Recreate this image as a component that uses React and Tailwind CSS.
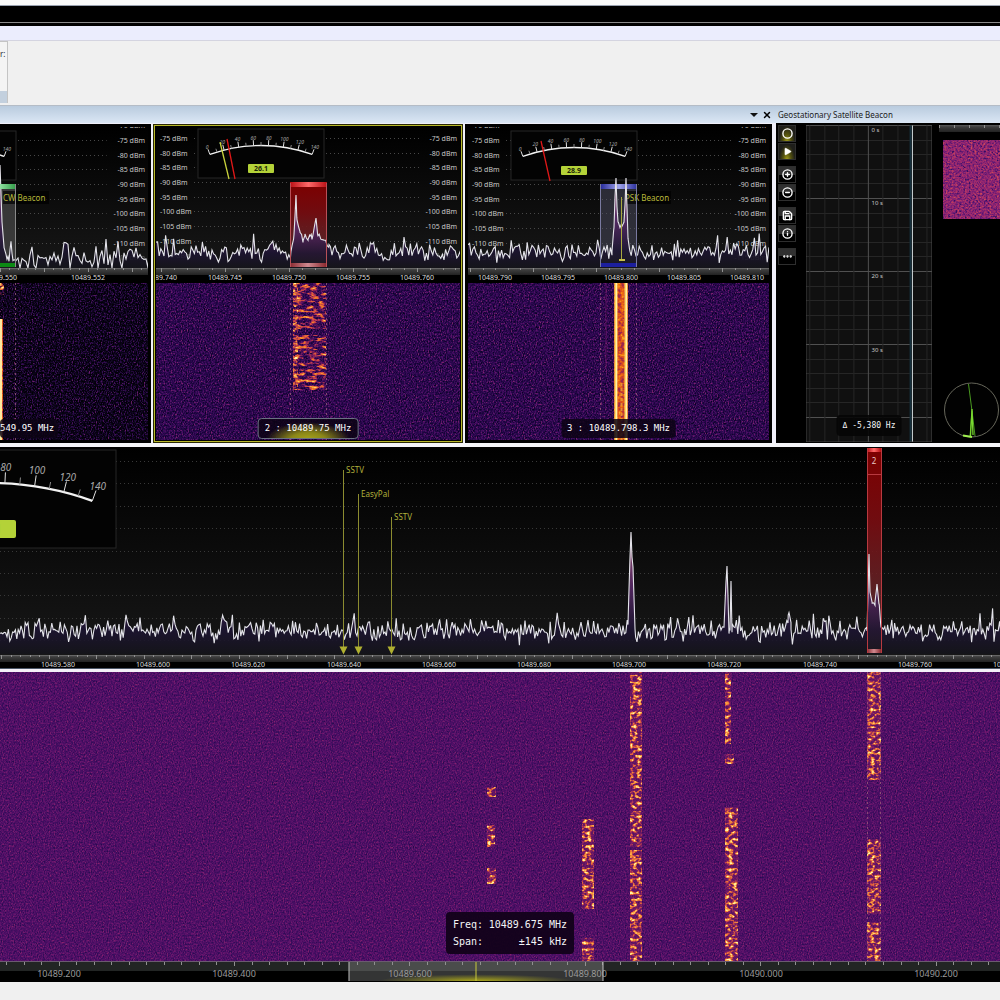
import React from "react";
import {
  Circle,
  CirclePlus,
  CircleMinus,
  Save,
  Info,
  Ellipsis,
  Play,
  X,
} from "lucide-react";

// Small seeded generator so the traces look the same on every render
const makeRandom = (seed) => {
  let s = seed;
  return () => {
    s = (s * 16807) % 2147483647;
    return s / 2147483647;
  };
};

// y on a list of [x, y] points, or null outside of them
const envelopeAt = (points, x) => {
  for (let i = 1; i < points.length; i++) {
    const [x0, y0] = points[i - 1];
    const [x1, y1] = points[i];
    if (x >= x0 && x <= x1) {
      return y0 + ((y1 - y0) * (x - x0)) / (x1 - x0 || 1);
    }
  }
  return null;
};

const makeTrace = ({ width, step, base, amp, floor, seed, signals }) => {
  const random = makeRandom(seed);
  const xs = [];
  for (let x = 0; x <= width; x += step) xs.push(x);
  signals.forEach((points) => points.forEach(([x]) => xs.push(x)));
  xs.sort((a, b) => a - b);

  return xs.map((x) => {
    let noise = (random() + random() + random() - 1.5) * amp;
    if (random() < 0.07) noise -= amp * (0.6 + random() * 0.8);
    let y = base + noise;
    for (const points of signals) {
      const top = envelopeAt(points, x);
      if (top !== null) y = top + (top > base - 30 ? noise * 0.3 : 0);
    }
    return [x, Math.min(y, floor)];
  });
};

const range = (count) => Array.from({ length: count }, (_, i) => i);

// Number of axis labels that fit the window
const countFor = (start, step) =>
  Math.max(1, Math.ceil((window.innerWidth + 14 - start) / step));

const Filters = () => (
  <svg className="absolute h-0 w-0" aria-hidden="true">
    <defs>
      {/* Background noise, one colour table for each brightness */}
      <filter id="noise-dark" x="0" y="0" width="100%" height="100%" colorInterpolationFilters="sRGB">
        <feTurbulence type="fractalNoise" baseFrequency="0.83 0.57" numOctaves="3" seed="4" />
        <feColorMatrix values="1.1 1.1 0 0 -0.62  1.1 1.1 0 0 -0.62  1.1 1.1 0 0 -0.62  0 0 0 0 1" />
        <feComponentTransfer>
          <feFuncR type="table" tableValues="0 0.01 0.05 0.2 0.42" />
          <feFuncG type="table" tableValues="0 0 0.02 0.05 0.12" />
          <feFuncB type="table" tableValues="0.02 0.03 0.11 0.32 0.4" />
        </feComponentTransfer>
      </filter>
      <filter id="noise-mid" x="0" y="0" width="100%" height="100%" colorInterpolationFilters="sRGB">
        <feTurbulence type="fractalNoise" baseFrequency="0.83 0.57" numOctaves="3" seed="9" />
        <feColorMatrix values="1.1 1.1 0 0 -0.6  1.1 1.1 0 0 -0.6  1.1 1.1 0 0 -0.6  0 0 0 0 1" />
        <feComponentTransfer>
          <feFuncR type="table" tableValues="0.03 0.09 0.17 0.3 0.5" />
          <feFuncG type="table" tableValues="0.01 0.02 0.03 0.06 0.14" />
          <feFuncB type="table" tableValues="0.13 0.22 0.31 0.4 0.42" />
        </feComponentTransfer>
      </filter>
      <filter id="noise-bright" x="0" y="0" width="100%" height="100%" colorInterpolationFilters="sRGB">
        <feTurbulence type="fractalNoise" baseFrequency="0.83 0.57" numOctaves="3" seed="2" />
        <feColorMatrix values="0.95 0.95 0 0 -0.45  0.95 0.95 0 0 -0.45  0.95 0.95 0 0 -0.45  0 0 0 0 1" />
        <feComponentTransfer>
          <feFuncR type="table" tableValues="0.15 0.22 0.31 0.41 0.54" />
          <feFuncG type="table" tableValues="0.04 0.05 0.06 0.09 0.14" />
          <feFuncB type="table" tableValues="0.3 0.36 0.4 0.43 0.42" />
        </feComponentTransfer>
      </filter>
      <filter id="noise-pink" x="0" y="0" width="100%" height="100%" colorInterpolationFilters="sRGB">
        <feTurbulence type="fractalNoise" baseFrequency="0.53 0.57" numOctaves="3" seed="7" />
        <feColorMatrix values="1.1 1.1 0 0 -0.6  1.1 1.1 0 0 -0.6  1.1 1.1 0 0 -0.6  0 0 0 0 1" />
        <feComponentTransfer>
          <feFuncR type="table" tableValues="0.2 0.38 0.55 0.68 0.8" />
          <feFuncG type="table" tableValues="0.06 0.1 0.14 0.2 0.3" />
          <feFuncB type="table" tableValues="0.38 0.45 0.45 0.4 0.34" />
        </feComponentTransfer>
      </filter>
      {/* Strong signals: same idea, but the low values are see-through */}
      <filter id="signal" x="0" y="0" width="100%" height="100%" colorInterpolationFilters="sRGB">
        <feTurbulence type="fractalNoise" baseFrequency="0.24 0.3" numOctaves="2" seed="11" />
        <feColorMatrix values="2.6 0 0 0 -1  2.6 0 0 0 -1  2.6 0 0 0 -1  2.6 0 0 0 -1" />
        <feComponentTransfer>
          <feFuncR type="table" tableValues="0.35 0.6 0.9 0.98 1" />
          <feFuncG type="table" tableValues="0.08 0.16 0.38 0.65 0.95" />
          <feFuncB type="table" tableValues="0.42 0.38 0.22 0.25 0.65" />
          <feFuncA type="table" tableValues="0 0.5 0.9 1 1" />
        </feComponentTransfer>
      </filter>
      <filter id="voice" x="0" y="0" width="100%" height="100%" colorInterpolationFilters="sRGB">
        <feTurbulence type="fractalNoise" baseFrequency="0.13 0.3" numOctaves="3" seed="5" />
        <feColorMatrix values="2.4 0 0 0 -0.95  2.4 0 0 0 -0.95  2.4 0 0 0 -0.95  2.4 0 0 0 -0.95" />
        <feComponentTransfer>
          <feFuncR type="table" tableValues="0.25 0.5 0.85 0.95 1" />
          <feFuncG type="table" tableValues="0.05 0.1 0.28 0.5 0.8" />
          <feFuncB type="table" tableValues="0.4 0.4 0.28 0.15 0.4" />
          <feFuncA type="table" tableValues="0 0.5 0.9 1 1" />
        </feComponentTransfer>
      </filter>
      <filter id="carrier" x="0" y="0" width="100%" height="100%" colorInterpolationFilters="sRGB">
        <feTurbulence type="fractalNoise" baseFrequency="0.3 0.35" numOctaves="2" seed="3" />
        <feColorMatrix values="2 0 0 0 -0.6  2 0 0 0 -0.6  2 0 0 0 -0.6  0 0 0 0 1" />
        <feComponentTransfer>
          <feFuncR type="table" tableValues="0.6 0.78 0.88 0.95 0.98" />
          <feFuncG type="table" tableValues="0.15 0.24 0.34 0.46 0.65" />
          <feFuncB type="table" tableValues="0.3 0.18 0.1 0.06 0.15" />
        </feComponentTransfer>
      </filter>

      <linearGradient id="plot" x1="0" y1="0" x2="0" y2="1">
        <stop offset="0" stopColor="#000000" />
        <stop offset="1" stopColor="#171717" />
      </linearGradient>
      <linearGradient id="ruler" x1="0" y1="0" x2="0" y2="1">
        <stop offset="0" stopColor="#5a5a5a" />
        <stop offset="0.3" stopColor="#3c3c3c" />
        <stop offset="1" stopColor="#222222" />
      </linearGradient>
      <linearGradient id="trace-fill" x1="0" y1="0" x2="0" y2="1">
        <stop offset="0" stopColor="#b06080" />
        <stop offset="0.45" stopColor="#5b2a6b" />
        <stop offset="0.8" stopColor="#1d1433" />
        <stop offset="1" stopColor="#14141a" />
      </linearGradient>
      <linearGradient id="red-body" x1="0" y1="0" x2="0" y2="1">
        <stop offset="0" stopColor="#7d0000" />
        <stop offset="0.35" stopColor="#700c10" />
        <stop offset="1" stopColor="#6b3a3e" stopOpacity="0.6" />
      </linearGradient>
      <linearGradient id="red-cap">
        <stop offset="0" stopColor="#b80f14" />
        <stop offset="0.5" stopColor="#ff6a6a" />
        <stop offset="1" stopColor="#b80f14" />
      </linearGradient>
      <linearGradient id="red-foot">
        <stop offset="0" stopColor="#8a2a30" />
        <stop offset="0.5" stopColor="#d08a90" />
        <stop offset="1" stopColor="#8a2a30" />
      </linearGradient>
      <linearGradient id="blue-cap">
        <stop offset="0" stopColor="#2a2e9c" />
        <stop offset="0.5" stopColor="#a0a4ea" />
        <stop offset="1" stopColor="#2a2e9c" />
      </linearGradient>
      <linearGradient id="green-cap">
        <stop offset="0" stopColor="#8fe0a0" />
        <stop offset="1" stopColor="#2f9a45" />
      </linearGradient>
      <radialGradient id="glow" cx="0.5" cy="1" r="0.5" gradientTransform="translate(0 0.3) scale(1 0.7)">
        <stop offset="0" stopColor="#a8a41c" />
        <stop offset="1" stopColor="#a8a41c" stopOpacity="0" />
      </radialGradient>
    </defs>
  </svg>
);

const Trace = ({ options }) => {
  const points = makeTrace(options);
  const line = points.map(([x, y]) => `${x},${y.toFixed(1)}`).join(" ");
  return (
    <g>
      <polygon
        points={`0,${options.floor} ${line} ${options.width},${options.floor}`}
        fill="url(#trace-fill)"
        opacity="0.85"
      />
      <polyline points={line} fill="none" stroke="#e4e4ea" strokeWidth="1.1" />
    </g>
  );
};

// S-meter: the dial is an arc, with 0 to 140 spread over 40 degrees
const Meter = ({ x, y, size = 1, value, needles = [], valueX = 63 }) => {
  const cx = x + 63 * size;
  const cy = y + 167.5 * size;
  const at = (v, r) => {
    const a = ((v / 140 - 0.5) * 39.6 * Math.PI) / 180;
    return [cx + Math.sin(a) * r * size, cy - Math.cos(a) * r * size];
  };
  const [x0, y0] = at(0, 151);
  const [x1, y1] = at(140, 151);
  return (
    <g>
      <rect x={x} y={y} width={126 * size} height={49 * size} fill="#030303" stroke="#262626" />
      <path
        d={`M${x0} ${y0} A${151 * size} ${151 * size} 0 0 1 ${x1} ${y1}`}
        fill="none"
        stroke="#f2f2f2"
        strokeWidth={size === 1 ? 1.4 : 2.2}
      />
      {range(15).map((i) => {
        const major = i % 2 === 0;
        const [ax, ay] = at(i * 10, 151);
        const [bx, by] = at(i * 10, major ? 156.5 : 154.5);
        return (
          <line key={i} x1={ax} y1={ay} x2={bx} y2={by} stroke={major ? "#e0e0e0" : "#888888"} />
        );
      })}
      {range(8).map((i) => {
        const [tx, ty] = at(i * 20, 159);
        return tx > 0 ? (
          <text
            key={i}
            x={tx}
            y={ty + 2 * size}
            textAnchor="middle"
            className={`fill-[#a8a8a8] italic ${size === 1 ? "text-[5px]" : "text-[10px]"}`}
          >
            {i * 20}
          </text>
        ) : null;
      })}
      {needles.map((n) => (
        <line
          key={n.color}
          x1={x + n.from[0]}
          y1={y + n.from[1]}
          x2={x + n.to[0]}
          y2={y + n.to[1]}
          stroke={n.color}
          strokeWidth="1.3"
        />
      ))}
      <rect x={x + 50 * size} y={y + 35 * size} width={26 * size} height={9 * size} rx={size} fill="#b4d238" />
      {value && (
        <text
          x={x + valueX * size}
          y={y + (size === 1 ? 42 : 83)}
          textAnchor="middle"
          className={`fill-[#1c2408] font-bold ${size === 1 ? "text-[7px]" : "text-[12px]"}`}
        >
          {value}
        </text>
      )}
    </g>
  );
};

const Axis = ({ y, labels, ticks, tickStep, tickStart = 0 }) => (
  <g>
    <rect y={y} width="100%" height="30" fill="#000000" />
    <rect y={y} width="100%" height="7" fill="url(#ruler)" />
    <line x1="0" x2="100%" y1={y + 0.5} y2={y + 0.5} stroke="#666666" />
    {range(ticks).map((i) => (
      <rect key={i} x={Math.round(tickStart + i * tickStep)} y={y} width="1" height={i % 5 ? 2 : 4} fill="#909090" />
    ))}
    {labels.map(([x, text]) => (
      <text key={text} x={x} y={y + 12} textAnchor="middle" className="fill-[#dedede] text-[7px]">
        {text}
      </text>
    ))}
  </g>
);

const levels = [-70, -75, -80, -85, -90, -95, -100, -105, -110, -115];

const LevelGrid = ({ top, left }) => (
  <g>
    {levels.map((level, i) => {
      const y = Math.round(top + (i - 1) * 14.65);
      return (
        <g key={level} opacity={level === -115 ? 0.45 : 1}>
          {level > -115 && (
            <svg x={left ? 38 : 18} width={left ? "75%" : "60%"} className="overflow-hidden">
              <line x1="0" x2="100%" y1={y + 0.5} y2={y + 0.5} stroke="#484848" strokeDasharray="1 3" />
            </svg>
          )}
          {left && (
            <text x="4" y={y + 3} className="fill-[#c8c8c8] text-[7px]">
              {level} dBm
            </text>
          )}
          <text x="100%" dx="-3" y={y + 3} textAnchor="end" className="fill-[#c8c8c8] text-[7px]">
            {level} dBm
          </text>
        </g>
      );
    })}
  </g>
);

const Dashed = ({ x, height = "100%" }) => (
  <line x1={x} x2={x} y1="0" y2={height} stroke="#9a5a7a" strokeDasharray="2 3" opacity="0.8" />
);

const Readout = ({ className = "", children }) => (
  <div
    className={`absolute whitespace-pre rounded bg-[#0c0414]/85 font-['DejaVu_Sans_Mono',monospace] text-[9px] leading-[19px] text-white ${className}`}
  >
    {children}
  </div>
);

const ChannelPanel = ({ selected, className = "", spectrum, waterfall, children }) => (
  <section
    className={`relative min-w-0 bg-black py-[3px] ${
      selected ? "shadow-[inset_0_0_0_1px_#2a2a05,inset_0_0_0_2px_#b8b82a]" : ""
    } ${className}`}
  >
    <svg className="block h-[156px] w-full">{spectrum}</svg>
    <svg className="block h-[157px] w-full">{waterfall}</svg>
    {children}
  </section>
);

const CwPanel = () => (
  <ChannelPanel
    className="pr-[3px]"
    spectrum={
      <>
        <rect width="100%" height="141" fill="url(#plot)" />
        <LevelGrid top={13} />
        <Meter x={-110} y={4} value="" />
        <rect x="0" y="57" width="15" height="84" fill="#4a4a4a" opacity="0.7" />
        <rect x="3" y="64" width="46" height="13" fill="#000000" opacity="0.7" />
        <text x="3" y="74" className="fill-[#b8b83a] text-[8px]">
          CW Beacon
        </text>
        <Trace
          options={{
            width: 700,
            step: 2,
            base: 131,
            amp: 15,
            floor: 141,
            seed: 71,
            signals: [[[0, 38], [2, 95], [4, 120], [7, 132], [9, 132], [11, 113], [13, 132], [16, 133]]],
          }}
        />
        <rect x="0" y="57" width="16" height="5" fill="url(#green-cap)" />
        <rect x="0" y="136" width="16" height="4" fill="#0c8a14" />
        <line x1="15.5" x2="15.5" y1="57" y2="140" stroke="#8a8a8a" />
        <Axis
          y={141}
          ticks={80}
          tickStep={8.8}
          labels={[
            [0, "10489.550"],
            [88, "10489.552"],
          ]}
        />
      </>
    }
    waterfall={
      <>
        <rect width="100%" height="100%" filter="url(#noise-dark)" />
        <rect x="0" y="0" width="4" height="12" filter="url(#signal)" />
        <rect x="0" y="36" width="3" height="121" filter="url(#carrier)" />
        <rect x="0" y="36" width="2" height="121" fill="#ffe9a0" />
        <Dashed x={15.5} />
      </>
    }
  >
    <Readout className="bottom-[5px] left-0 pr-1">549.95 MHz</Readout>
  </ChannelPanel>
);

const VoicePanel = () => (
  <ChannelPanel
    selected
    className="px-[3px]"
    spectrum={
      <>
        <rect width="100%" height="141" fill="url(#plot)" />
        <LevelGrid top={11} left />
        <Meter
          x={42}
          y={2}
          value="26.1"
          needles={[
            { color: "#c8d23c", from: [22, 13], to: [31, 50] },
            { color: "#e01818", from: [29, 10], to: [37, 50] },
          ]}
        />
        <rect x="134" y="56" width="36" height="84" fill="url(#red-body)" />
        <Trace
          options={{
            width: 900,
            step: 1.6,
            base: 125,
            amp: 9,
            floor: 141,
            seed: 23,
            signals: [
              [
                [135, 124], [138, 110], [140, 68], [141, 96], [144, 105], [147, 114], [149, 108],
                [152, 112], [154, 108], [156, 112], [160, 91], [162, 108], [166, 112], [169, 112], [173, 122],
              ],
            ],
          }}
        />
        <rect x="134" y="55" width="37" height="5" fill="url(#red-cap)" />
        <rect x="134" y="136" width="36" height="4" fill="url(#red-foot)" />
        <path d="M134.5 56V140M170.5 56V140" stroke="#b85058" />
        <Axis
          y={141}
          ticks={80}
          tickStep={12.8}
          tickStart={5}
          labels={[
            [4, "10489.740"],
            [69, "10489.745"],
            [133, "10489.750"],
            [197, "10489.755"],
            [261, "10489.760"],
          ]}
        />
      </>
    }
    waterfall={
      <>
        <rect width="100%" height="100%" filter="url(#noise-mid)" />
        <rect x="137" y="0" width="33" height="46" filter="url(#voice)" />
        <rect x="137" y="52" width="33" height="55" filter="url(#voice)" />
        <rect x="137" y="0" width="5" height="107" filter="url(#signal)" />
        <Dashed x={134.5} />
        <Dashed x={170.5} />
      </>
    }
  >
    <Readout className="bottom-1 left-1/2 -translate-x-1/2 border border-gray-500 bg-[radial-gradient(ellipse_at_50%_110%,#a8a41c_0%,#8a8618_25%,transparent_60%)] px-1.5">
      2 : 10489.75 MHz
    </Readout>
  </ChannelPanel>
);

const PskPanel = () => (
  <ChannelPanel
    className="px-[3px]"
    spectrum={
      <>
        <rect width="100%" height="141" fill="url(#plot)" />
        <LevelGrid top={13} left />
        <Meter
          x={43}
          y={4}
          value="28.9"
          needles={[{ color: "#e01818", from: [30, 10], to: [39, 50] }]}
        />
        <rect x="133" y="57" width="35" height="83" fill="#55556a" opacity="0.45" />
        <rect x="159" y="64" width="44" height="13" fill="#000000" opacity="0.7" />
        <text x="157" y="74" className="fill-[#b8b83a] text-[8px]">
          PSK Beacon
        </text>
        <rect x="133" y="57" width="36" height="5" fill="url(#blue-cap)" />
        <Trace
          options={{
            width: 900,
            step: 1.6,
            base: 125,
            amp: 9,
            floor: 141,
            seed: 47,
            signals: [
              [
                [144, 126], [146, 100], [147, 70], [148, 51], [149, 80], [150, 95], [153, 102],
                [156, 95], [157, 78], [158, 51], [159, 80], [160, 110], [162, 126],
              ],
            ],
          }}
        />
        <rect x="133" y="136" width="36" height="4" fill="#1c1f9e" />
        <path d="M132.5 57V140M168.5 57V140" stroke="#7a7aa0" />
        <path d="M153.5 70V133" stroke="#a8a840" />
        <rect x="151" y="132" width="6" height="2" fill="#c8c04a" />
        <Axis
          y={141}
          ticks={80}
          tickStep={12.6}
          tickStart={2}
          labels={[
            [27, "10489.790"],
            [90, "10489.795"],
            [153, "10489.800"],
            [216, "10489.805"],
            [279, "10489.810"],
          ]}
        />
      </>
    }
    waterfall={
      <>
        <rect width="100%" height="100%" filter="url(#noise-mid)" />
        <rect x="146" y="0" width="14" height="100%" filter="url(#carrier)" />
        <path d="M148 0V157M158 0V157" stroke="#ffd860" strokeWidth="3" />
        <path d="M148.500 0V157M158.500 0V157" stroke="#fff0a8" />
        <path d="M153.500 100V157" stroke="#e89030" strokeWidth="2" strokeDasharray="3 2" />
        <Dashed x={132.5} />
        <Dashed x={168.5} />
        <line x1="138" x2="138" y1="0" y2="85" stroke="#7a1a6a" opacity="0.6" />
      </>
    }
  >
    <Readout className="bottom-[5px] left-1/2 -translate-x-1/2 px-1.5">
      3 : 10489.798.3 MHz
    </Readout>
  </ChannelPanel>
);

const tools = [
  { label: "Record", icon: Circle, active: true },
  { label: "Play", icon: Play, active: true, solid: true },
  { label: "Zoom in", icon: CirclePlus, gap: true },
  { label: "Zoom out", icon: CircleMinus },
  { label: "Save", icon: Save, gap: true },
  { label: "Info", icon: Info },
  { label: "More", icon: Ellipsis, gap: true },
];

const BeaconPanel = () => (
  <section className="flex min-w-0 flex-1 gap-[10px] bg-black pt-0.5 pl-0.5">
    <div className="flex w-[18px] shrink-0 flex-col gap-px">
      {tools.map(({ label, icon: Icon, active, solid, gap }) => (
        <button
          key={label}
          type="button"
          aria-label={label}
          className={`flex h-[17px] items-center justify-center border border-[#2e2e2e] text-white ${
            gap ? "mt-[5px]" : ""
          } ${
            active
              ? "bg-[radial-gradient(ellipse_at_50%_110%,#a8a41c_0%,#55530e_35%,#1e1e1a_70%)]"
              : "bg-linear-to-b from-[#303030] from-50% to-black to-50%"
          }`}
        >
          <Icon size={solid ? 9 : 11} strokeWidth={solid ? 1 : 3} fill={solid ? "currentColor" : "none"} />
        </button>
      ))}
    </div>

    <div className="relative min-w-0 flex-1">
      <svg className="block h-[317px] w-full">
        <rect x="0.5" y="0.5" width="100%" height="316" fill="#101010" />
        {range(21).map((i) => (
          <line key={i} x1="0" x2="100%" y1={Math.round(i * 14.6) + 0.5} y2={Math.round(i * 14.6) + 0.5} stroke={i % 5 ? "#262626" : "#505050"} />
        ))}
        {["3%", "15%", "26%", "38%", "49.500%", "61%", "73%", "84%", "96%"].map((x, i) => (
          <line key={x} x1={x} x2={x} y1="0" y2="100%" stroke={i === 4 ? "#505050" : "#262626"} />
        ))}
        <line x1="83%" x2="83%" y1="0" y2="100%" stroke="#16303c" strokeWidth="2" />
        <line x1="84.500%" x2="84.500%" y1="0" y2="100%" stroke="#c8d0d2" />
        <rect x="0" y="0" width="100%" height="317" fill="none" stroke="#4a4a4a" />
        {range(4).map((i) => (
          <text key={i} x="52%" y={7 + Math.round(i * 73.2)} className="fill-[#c8c8c8] text-[6px]">
            {i * 10} s
          </text>
        ))}
      </svg>
      <div className="absolute bottom-[7px] left-1/2 -translate-x-1/2 whitespace-pre rounded bg-[#060606]/90 px-1.5 font-['DejaVu_Sans_Mono',monospace] text-[8px] leading-[21px] text-gray-100">
        Δ -5,380 Hz
      </div>
    </div>

    <div className="-ml-[3px] flex w-[61px] shrink-0 flex-col justify-between">
      <svg className="block h-[94px] w-full">
        <rect width="100%" height="7" fill="url(#ruler)" />
        {range(5).map((i) => (
          <rect key={i} x={i * 15} y="0" width="1" height="3" fill="#909090" />
        ))}
        <rect x="4" y="15" width="57" height="79" filter="url(#noise-pink)" />
      </svg>
      <svg className="mb-1 block h-[58px] w-full">
        <circle cx="32.500" cy="29" r="27" fill="#020202" stroke="#66665a" />
        <path d="M29.500 3L33 30M33 30L31 55M33 30L36 55" fill="none" stroke="#4a9a20" />
        <path d="M33 28L31.500 55M33 28L34 54" fill="none" stroke="#7ad830" strokeWidth="1.300" />
        <path d="M24 54.500L33 56" fill="none" stroke="#a0f050" strokeWidth="2" />
      </svg>
    </div>
  </section>
);

const markers = [
  { x: 343, y: 23, label: "SSTV" },
  { x: 358, y: 47, label: "EasyPal" },
  { x: 391, y: 70, label: "SSTV" },
];

const MainSpectrum = () => (
  <svg className="block h-[221px] w-full bg-black">
    <rect width="100%" height="208" fill="url(#plot)" />
    {range(9).map((i) => {
      const y = Math.round(14 + i * 22.4) + 0.5;
      return (
        <line key={i} x1="0" x2="100%" y1={y} y2={y} stroke="#383838" strokeDasharray="1 3" />
      );
    })}
    <Meter x={-136} y={3} size={2} value="1" valueX={67} />
    <rect x="867" y="1" width="14" height="205" fill="url(#red-body)" />
    <Trace
      options={{
        width: 2600,
        step: 1.4,
        base: 184,
        amp: 10,
        floor: 207,
        seed: 91,
        signals: [
          [[628, 178], [630, 110], [631, 85], [632, 110], [633, 120], [635, 180]],
          [[724, 178], [726, 135], [727, 119], [728, 150], [729, 184]],
          [[730, 184], [731, 134], [732, 184]],
          [[788, 178], [789, 165], [791, 180]],
          [[867, 184], [869, 107], [870, 145], [872, 155], [875, 157], [877, 137], [879, 157], [881, 180]],
        ],
      }}
    />
    <rect x="867" y="1" width="14" height="4" fill="url(#red-cap)" />
    <rect x="867" y="202" width="14" height="4" fill="url(#red-foot)" />
    <path d="M867.500 1V206M881.500 1V206M867 27.500H881" fill="none" stroke="#b83a40" />
    <text x="874" y="17" textAnchor="middle" className="fill-[#e8c8c8] text-[8px]">
      2
    </text>
    {markers.map(({ x, y, label }) => (
      <g key={x}>
        <line x1={x + 0.5} x2={x + 0.5} y1={y} y2="202" stroke="#8c8c30" />
        <path d={`M${x - 3.5} 199.500h8l-4 8z`} fill="#b0b030" />
        <text x={x + 3} y={y + 3} className="fill-[#b0b03a] text-[8px]">
          {label}
        </text>
      </g>
    ))}
    <Axis
      y={208}
      ticks={300}
      tickStep={9.52}
      tickStart={1}
      labels={range(countFor(58, 95.2)).map((i) => [
        Math.round(58 + i * 95.2),
        (10489.58 + i * 0.02).toFixed(3),
      ])}
    />
  </svg>
);

// [x, y, width, height] of every transmission in the waterfall
const bursts = [
  [487, 115, 9, 10],
  [487, 153, 8, 22],
  [487, 196, 9, 16],
  [582, 147, 12, 90],
  [582, 266, 12, 23],
  [630, 0, 12, 175],
  [630, 178, 12, 111],
  [725, 0, 6, 72],
  [725, 82, 9, 10],
  [725, 135, 13, 154],
  [867, 0, 14, 108],
  [867, 167, 14, 75],
  [867, 250, 14, 39],
];

const MainWaterfall = () => (
  <div className="relative">
    <svg className="block h-[289px] w-full bg-[#4c1264]">
      <rect width="100%" height="100%" filter="url(#noise-bright)" />
      {bursts.map(([x, y, w, h]) => (
        <g key={`${x}-${y}`}>
          <rect x={x} y={y} width={w} height={h} fill="#8a2060" opacity="0.35" />
          <rect x={x} y={y} width={w} height={h} filter="url(#signal)" />
          <rect x={x} y={y} width={5} height={h} filter="url(#signal)" />
        </g>
      ))}
      <Dashed x={867.5} />
      <Dashed x={880.5} />
    </svg>
    <dl className="absolute bottom-[7px] left-[51%] grid w-[128px] -translate-x-1/2 grid-cols-[auto_1fr] rounded bg-[#12021a]/95 px-[7px] py-1 font-['DejaVu_Sans_Mono',monospace] text-[10px] leading-[17px] text-gray-100">
      <dt>Freq:</dt>
      <dd className="text-right">10489.675 MHz</dd>
      <dt>Span:</dt>
      <dd className="text-right">±145 kHz</dd>
    </dl>
  </div>
);

const BandScale = () => (
  <svg className="block h-[21px] w-full bg-black">
    <rect width="100%" height="10" fill="#222524" />
    <line x1="0" x2="100%" y1="0.500" y2="0.500" stroke="#6a5a70" />
    <rect x="349" y="1" width="254" height="19" fill="#4a4c4b" />
    <rect x="349" y="10" width="254" height="10" fill="#343535" />
    <rect x="379" y="1" width="194" height="19" fill="url(#glow)" />
    {range(110).map((i) => (
      <rect key={i} x={Math.round(6 + i * 17.54)} y="1" width="1" height={i % 10 === 3 ? 4 : 3} fill="#909090" />
    ))}
    {range(countFor(59, 175.4)).map((i) => (
      <text key={i} x={Math.round(59 + i * 175.4)} y="16" textAnchor="middle" className="fill-[#9a9a9a] text-[9px]">
        {(10489.2 + i * 0.2).toFixed(3)}
      </text>
    ))}
    <path d="M349 1V20M603 1V20" stroke="#c0c0c0" />
    <line x1="476" x2="476" y1="1" y2="20" stroke="#c8c83c" />
  </svg>
);

const App = () => {
  return (
    <div className="flex min-h-screen flex-col bg-[#f0f0f0] font-['Noto_Sans',sans-serif] text-[8px] text-gray-800">
      <Filters />

      {/* Window chrome */}
      <div className="h-[5px] bg-[#fafafa]" />
      <div className="h-[21px] border-t border-gray-400 bg-black pt-4">
        <div className="h-px bg-[#8a8a8a]" />
      </div>
      <div className="h-[15px] border-b border-[#d4d4e0] bg-[#ebedfd]" />
      <div className="flex h-[65px] items-start border-b border-[#b4bcc6]">
        <div className="flex h-[62px] w-2 flex-col justify-between overflow-hidden border-t border-r border-[#c4c4c4] bg-[#f4f4f4]">
          <span className="mt-1.5 text-[8px] leading-3">r:</span>
          <div className="h-3 bg-[#c3d0de]" />
        </div>
      </div>

      {/* Docked panels */}
      <div className="grid grid-cols-[772fr_224fr] gap-1 bg-[#f0f0fa]">
        <div className="-mr-1 flex min-w-0 flex-col">
          <header className="flex h-[17px] items-center justify-end gap-1 bg-linear-to-b from-[#b9cbde] to-[#dbe7f5] pr-1 text-black">
            <button type="button" aria-label="Panel menu">
              <svg className="block h-1.5 w-2">
                <path d="M0 1h8l-4 4z" fill="#111111" />
              </svg>
            </button>
            <button type="button" aria-label="Close">
              <X size={10} strokeWidth={3.5} />
            </button>
          </header>
          <div className="mr-1 grid flex-1 grid-cols-[151fr_310fr_307fr] gap-0.5 pt-px">
            <CwPanel />
            <VoicePanel />
            <PskPanel />
          </div>
        </div>
        <div className="flex min-w-0 flex-col">
          <header className="flex h-[17px] items-center bg-linear-to-b from-[#b9cbde] to-[#dbe7f5] pl-0.5 text-[8px] text-[#222222]">
            Geostationary Satellite Beacon
          </header>
          <BeaconPanel />
        </div>
      </div>

      <div className="h-[4px] bg-[#f4f4f8]" />
      <MainSpectrum />
      <div className="h-[4px] border-t border-gray-600 bg-[#f4f0f8]" />
      <MainWaterfall />
      <BandScale />
    </div>
  );
};

export default App;
